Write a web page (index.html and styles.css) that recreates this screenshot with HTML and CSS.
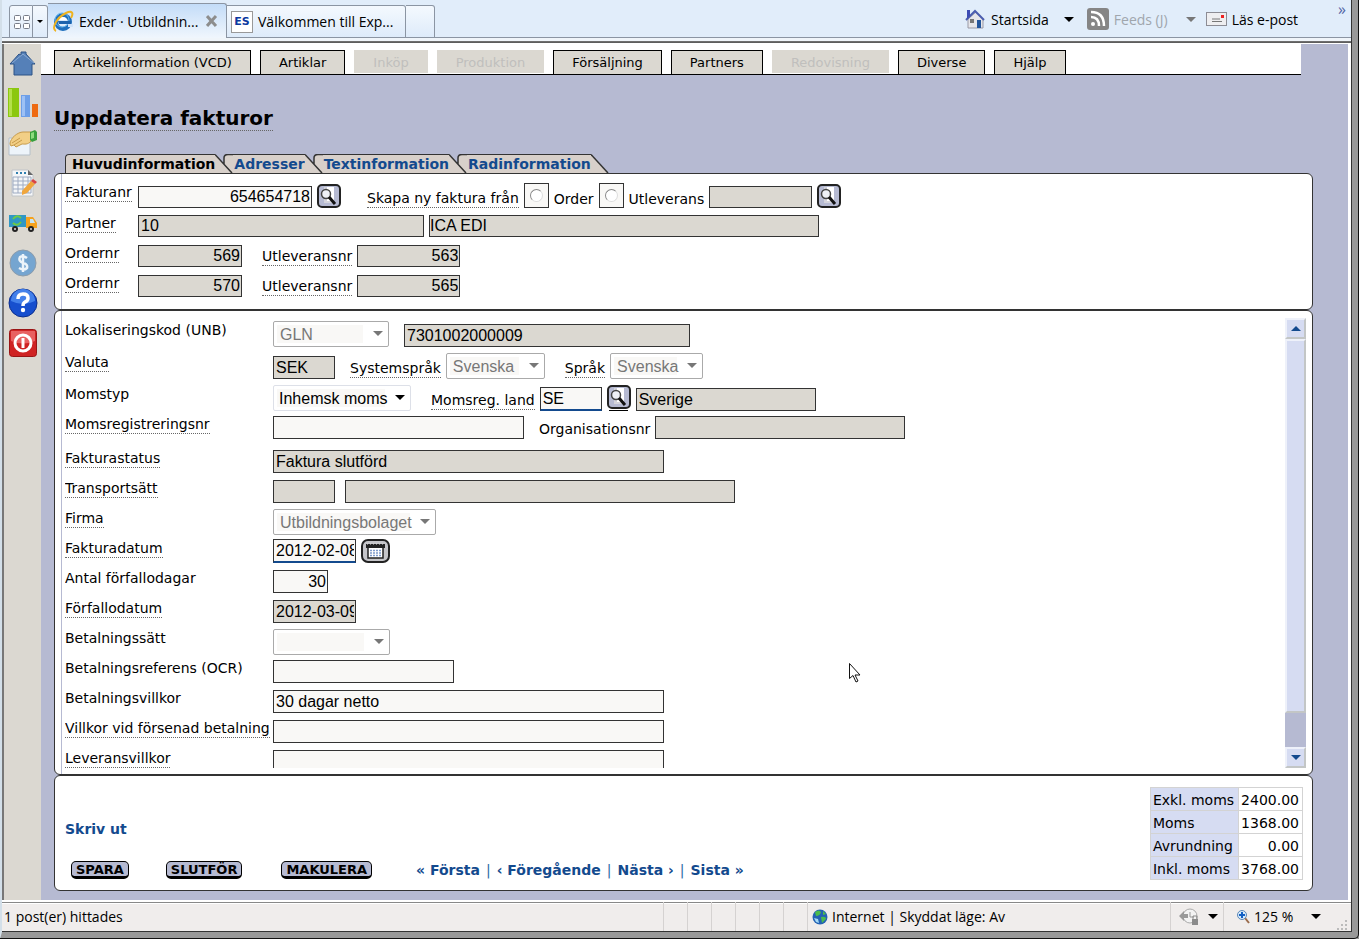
FILE: index.html
```html
<!DOCTYPE html>
<html lang="sv">
<head>
<meta charset="utf-8">
<title>Exder · Utbildning</title>
<link rel="stylesheet" href="styles.css">
</head>
<body>
<svg class="defs" aria-hidden="true">
  <defs>
    <symbol id="search" viewBox="0 0 24 24">
      <rect x="1" y="1" width="22" height="22" rx="4" fill="#b6bad2" stroke="#222" stroke-width="2"/>
      <path d="M7 3h10v16H7z" fill="#d4d4dc"/><path d="M10 3h7v14h-7z" fill="#fff"/>
      <circle cx="9" cy="10" r="4.500" fill="#eef0f6" stroke="#444" stroke-width="1.500"/>
      <path d="M12 13l6 7" stroke="#111" stroke-width="3"/>
    </symbol>
    <symbol id="seam" viewBox="0 0 18 19">
      <path d="M0 0h18v19H0z" fill="#d8d0ca"/>
      <path d="M0 0L9 10V4Q9 1 12 0z" fill="#b6bad2"/>
      <path d="M9 10V4Q9 .5 13 .5h5M0 .5L17 19" fill="none" stroke="#333" stroke-width="1.500"/>
    </symbol>
  </defs>
</svg>
<header class="browser">
  <div class="tabs-browser">
    <button class="btab quick" aria-label="Snabbflikar"><svg width="16" height="14" viewBox="0 0 16 14" fill="#fff" stroke="#777c88"><rect x=".5" y=".5" width="6" height="5" rx="1"/><rect x="9.500" y=".5" width="6" height="5" rx="1"/><rect x=".5" y="8.500" width="6" height="5" rx="1"/><rect x="9.500" y="8.500" width="6" height="5" rx="1"/></svg></button>
    <button class="btab drop" aria-label="Flikar"><i class="tri small"></i></button>
    <button class="btab active">
      <svg width="21" height="22" viewBox="0 0 21 22"><circle cx="10" cy="12" r="7" fill="none" stroke="#1f6fbd" stroke-width="4"/><circle cx="9" cy="10" r="7" fill="none" stroke="#63b5ee" stroke-width="1"/><path d="M5 11h13v3H6z" fill="#1b62ad"/><path d="M6 10c1-4 7-4 8 0z" fill="#fff"/><path d="M15 14h5v3h-5z" fill="#cfe2fa"/><path d="M3 21C-2 19 3 8 13 3c6-3 8 0 5 5" fill="none" stroke="#eeb320" stroke-width="2"/></svg>
      <span>Exder · Utbildnin...</span>
      <svg class="close" width="12" height="12" viewBox="0 0 12 12"><path d="M1 1l9 10M10 1L1 11" stroke="#8d8d8d" stroke-width="3"/></svg>
    </button>
    <button class="btab second">
      <span class="es">ES</span><span>Välkommen till Exp...</span>
    </button>
    <button class="btab blank" aria-label="Ny flik"></button>
  </div>
  <nav class="commands">
    <a href="#"><svg width="21" height="21" viewBox="0 0 21 21"><path d="M3 10v9h15v-9l-7-7z" fill="#e6e6ea" stroke="#9999a5"/><path d="M1 11L10 2l9 9" fill="none" stroke="#4b5dae" stroke-width="2"/><path d="M2 1h3v6l-3 3z" fill="#3c4bb4"/><path d="M12 11h4v8h-4z" fill="#24569c"/><path d="M5 10h4v4H5z" fill="#777"/></svg>Startsida</a>
    <i class="tri"></i>
    <a href="#" class="off"><svg width="22" height="22" viewBox="0 0 22 22"><rect width="22" height="22" rx="3" fill="#858585"/><circle cx="6" cy="16" r="2" fill="#fff"/><path d="M4 9q8 0 8 9M4 4q13 0 13 14" fill="none" stroke="#fff" stroke-width="2.500"/></svg>Feeds (J)</a>
    <i class="tri gray"></i>
    <a href="#" class="mail"><svg width="21" height="14" viewBox="0 0 21 14"><rect x=".5" y=".5" width="20" height="13" fill="#eeeef0" stroke="#8c8c94"/><path d="M15 3h3v3h-3z" fill="#e22"/><path d="M6 7h8M6 9.500h10" stroke="#777"/></svg>Läs e-post</a>
    <span class="more">»</span>
  </nav>
</header>
<div class="window">
  <aside class="side">
    <a href="#" aria-label="Hem"><svg width="28" height="28" viewBox="0 0 28 28"><path d="M5 14v11h18V14h3L17 4V2h-5v3l-2-1-9 10z" fill="#5580b8" stroke="#2d5286"/><path d="M3 13L14 4l11 9" fill="none" stroke="#88a9d4"/></svg></a>
    <a href="#" aria-label="Statistik"><svg width="30" height="32" viewBox="0 0 30 32"><path d="M0 1h11v29H0z" fill="#8bc70f"/><path d="M1 2h3v27H1z" fill="#b4e04a"/><path d="M13 8h9v22h-9z" fill="#6d9fe8"/><path d="M14 9h3v20h-3z" fill="#9dc1f5"/><path d="M24 17h6v13h-6z" fill="#ee6a10"/></svg></a>
    <a href="#" aria-label="Partners"><svg width="30" height="28" viewBox="0 0 30 28"><path d="M1 9h21v17H1z" fill="#edf4fa" stroke="#b4bfc9"/><path d="M2 15c0-6 8-12 13-12h8v9c-3 4-7 3-9 3l-6 3-2-2-3 1z" fill="#f2cf86" stroke="#c79b4b"/><path d="M4 14l8-5M6 16l8-5" stroke="#c79b4b"/><path d="M22 3l5-2 2 2v8l-5 2-2-2z" fill="#37a03c"/><path d="M23 4l3-1v6l-3 1z" fill="#8bdc7d"/></svg></a>
    <a href="#" aria-label="Dokument"><svg width="28" height="30" viewBox="0 0 28 30"><path d="M3 2h16l5 5v21H3z" fill="#f4f6f8" stroke="#c0c4c8"/><path d="M4 9h18v16H4zM4 13h18M4 17h18M4 21h18M9 9v16M14 9v16M19 9v16" fill="none" stroke="#9eabc2"/><path d="M7 5h2m2 0h2m2 0h2" stroke="#2f7faf" stroke-width="2"/><path d="M19 2l5 5h-5z" fill="#666"/><path d="M13 23l9-10 4 3-8 9-5 2z" fill="#f0a63c"/><path d="M22 13l2-2 4 3-2 2z" fill="#d84444"/></svg></a>
    <a href="#" aria-label="Leverans"><svg width="30" height="20" viewBox="0 0 30 20"><path d="M1 2h17v12H1z" fill="#2f97c5"/><path d="M5 6q4-5 8-1M13 9q-4 5-8 1" fill="none" stroke="#6cca45" stroke-width="2"/><path d="M18 4h7l4 6v5H18z" fill="#f5a21d"/><path d="M22 6h3l2 4h-5z" fill="#c7e6f5"/><circle cx="7" cy="16" r="3" fill="#222"/><circle cx="23" cy="16" r="3" fill="#222"/><circle cx="7" cy="16" r="1" fill="#ddd"/><circle cx="23" cy="16" r="1" fill="#ddd"/></svg></a>
    <a href="#" aria-label="Ekonomi"><svg width="28" height="28" viewBox="0 0 28 28"><circle cx="14" cy="14" r="13" fill="#75a5d0" stroke="#8c9cab"/><path d="M18 9q-4-3-7-1-2 4 3 6 5 1 4 5-3 3-8 0M14 5v18" fill="none" stroke="#edf4fa" stroke-width="2.500"/></svg></a>
    <a href="#" aria-label="Hjälp"><svg width="30" height="30" viewBox="0 0 30 30"><circle cx="15" cy="15" r="14" fill="#174fce" stroke="#0d2f8d"/><path d="M3 13a12 12 0 0 1 24 0q-12 6-24 0" fill="#4380ea"/><path d="M10 11q0-5 5-5t5 4q0 3-3 4-2 1-2 4" fill="none" stroke="#fff" stroke-width="3.500"/><circle cx="15" cy="22" r="2.200" fill="#fff"/></svg></a>
    <a href="#" aria-label="Logga ut"><svg width="28" height="28" viewBox="0 0 28 28"><rect x=".5" y=".5" width="27" height="27" rx="3" fill="#cf2323" stroke="#991515"/><path d="M2 2h24v10Q14 17 2 12z" fill="#e86161"/><circle cx="14" cy="14" r="8" fill="none" stroke="#fff" stroke-width="3"/><path d="M14 9v10" stroke="#fff" stroke-width="3"/></svg></a>
  </aside>
  <div class="page">
    <nav class="menu">
      <button>Artikelinformation (VCD)</button><button>Artiklar</button><button disabled>Inköp</button><button disabled>Produktion</button><button>Försäljning</button><button>Partners</button><button disabled>Redovisning</button><button>Diverse</button><button>Hjälp</button>
    </nav>
    <main class="content">
      <h1><span>Uppdatera fakturor</span></h1>
      <nav class="tabs">
        <a href="#" class="first">Huvudinformation</a><svg width="18" height="19"><use href="#seam"/></svg>
        <a href="#">Adresser</a><svg width="18" height="19"><use href="#seam"/></svg>
        <a href="#">Textinformation</a><svg width="18" height="19"><use href="#seam"/></svg>
        <a href="#">Radinformation</a><svg width="18" height="19" viewBox="0 0 18 19"><path d="M0 0L17 19H0z" fill="#d8d0ca"/><path d="M0 .5L17 19" stroke="#333" stroke-width="1.500"/></svg>
      </nav>
      <section class="panel ruled head">
        <div class="row r31"><label class="main" for="fnr"><span class="hint">Fakturanr</span></label>
          <div class="fields"><input id="fnr" class="w174 num" value="654654718"><button class="ico" aria-label="Sök faktura"><svg width="24" height="24"><use href="#search"/></svg></button>
            <span class="hint create">Skapa ny faktura från</span><span class="radio"><input type="radio" name="src" id="ro"></span><label for="ro">Order</label><span class="radio"><input type="radio" name="src" id="ru"></span><label for="ru">Utleverans</label><input class="w103" readonly aria-label="Nummer"><button class="ico" aria-label="Sök order"><svg width="24" height="24"><use href="#search"/></svg></button></div></div>
        <div class="row"><label class="main" for="pa"><span class="hint">Partner</span></label><div class="fields"><input id="pa" class="w286" readonly value="10"><input class="w390 tight" readonly value="ICA EDI" aria-label="Partnernamn"></div></div>
        <div class="row"><label class="main" for="o1"><span class="hint">Ordernr</span></label><div class="fields"><input id="o1" class="w104 num" readonly value="569"><label class="hint far" for="u1">Utleveransnr</label><input id="u1" class="w103 num" readonly value="563"></div></div>
        <div class="row"><label class="main" for="o2"><span class="hint">Ordernr</span></label><div class="fields"><input id="o2" class="w104 num" readonly value="570"><label class="hint far" for="u2">Utleveransnr</label><input id="u2" class="w103 num" readonly value="565"></div></div>
      </section>
      <section class="panel ruled body">
        <div class="form">
          <div class="row r32"><label class="main" for="lk">Lokaliseringskod (UNB)</label><div class="fields"><span class="sel w116"><select id="lk" disabled><option>GLN</option></select></span><input class="w286 push" readonly value="7301002000009" aria-label="Kod"></div></div>
          <div class="row r32"><label class="main" for="va"><span class="hint">Valuta</span></label><div class="fields"><input id="va" class="w62" readonly value="SEK"><label class="hint mid" for="ss">Systemspråk</label><span class="sel w99"><select id="ss" disabled><option>Svenska</option></select></span><label class="hint far" for="sp">Språk</label><span class="sel w93"><select id="sp" disabled><option>Svenska</option></select></span></div></div>
          <div class="row"><label class="main" for="mt">Momstyp</label><div class="fields"><span class="sel on w138"><select id="mt"><option>Inhemsk moms</option></select></span><label class="hint far" for="ml">Momsreg. land</label><input id="ml" class="w62 req" value="SE"><button class="ico low" aria-label="Sök land"><svg width="24" height="24"><use href="#search"/></svg></button><input class="w180" readonly value="Sverige" aria-label="Land"></div></div>
          <div class="row r34"><label class="main" for="mr"><span class="hint">Momsregistreringsnr</span></label><div class="fields"><input id="mr" class="w251"><label class="mid" for="on">Organisationsnr</label><input id="on" class="w250" readonly></div></div>
          <div class="row"><label class="main" for="fs"><span class="hint">Fakturastatus</span></label><div class="fields"><input id="fs" class="w391" readonly value="Faktura slutförd"></div></div>
          <div class="row"><label class="main" for="ts"><span class="hint">Transportsätt</span></label><div class="fields"><input id="ts" class="w62" readonly><input class="w390 push5" readonly aria-label="Transportsätt, namn"></div></div>
          <div class="row"><label class="main" for="fi"><span class="hint">Firma</span></label><div class="fields"><span class="sel w163"><select id="fi" disabled><option>Utbildningsbolaget</option></select></span></div></div>
          <div class="row"><label class="main" for="fd"><span class="hint">Fakturadatum</span></label><div class="fields"><input id="fd" class="w83 req" value="2012-02-08"><button class="ico" aria-label="Kalender"><svg width="29" height="24" viewBox="0 0 29 24"><rect x="1" y="1" width="27" height="22" rx="6" fill="#c5c5c9" stroke="#222" stroke-width="2"/><path d="M7 8h15v11H7z" fill="#fff" stroke="#222" stroke-width="1.500"/><path d="M5 5h19v4H5z" fill="#222"/><path d="M6 5h18" stroke="#ddd" stroke-dasharray="1 2"/><path d="M9 11.500h11M9 14h11M9 16.500h11" stroke="#7f9ccd" stroke-width="1.500" stroke-dasharray="2 1"/></svg></button></div></div>
          <div class="row"><label class="main" for="af">Antal förfallodagar</label><div class="fields"><input id="af" class="w55 num" value="30"></div></div>
          <div class="row"><label class="main" for="ff"><span class="hint">Förfallodatum</span></label><div class="fields"><input id="ff" class="w83" readonly value="2012-03-09"></div></div>
          <div class="row"><label class="main" for="bs">Betalningssätt</label><div class="fields"><span class="sel w117"><select id="bs" disabled><option></option></select></span></div></div>
          <div class="row"><label class="main" for="br">Betalningsreferens (OCR)</label><div class="fields"><input id="br" class="w181"></div></div>
          <div class="row"><label class="main" for="bv">Betalningsvillkor</label><div class="fields"><input id="bv" class="w391" value="30 dagar netto"></div></div>
          <div class="row"><label class="main" for="vf"><span class="hint">Villkor vid försenad betalning</span></label><div class="fields"><input id="vf" class="w391"></div></div>
          <div class="row"><label class="main" for="lv"><span class="hint">Leveransvillkor</span></label><div class="fields"><input id="lv" class="w391"></div></div>
        </div>
        <div class="scroll"><button aria-label="Upp"><svg width="10" height="5" viewBox="0 0 10 5"><path d="M0 5l5-5 5 5z" fill="#134a8e"/></svg></button><div class="thumb"></div><div class="track"></div><button aria-label="Ned"><svg width="10" height="5" viewBox="0 0 10 5"><path d="M0 0l5 5 5-5z" fill="#134a8e"/></svg></button></div>
      </section>
      <section class="panel foot">
        <div class="actions">
          <a href="#">Skriv ut</a>
          <div class="bar">
            <button class="act">SPARA</button><button class="act">SLUTFÖR</button><button class="act wide">MAKULERA</button>
            <nav class="pager"><a href="#">« Första</a><span>|</span><a href="#">‹ Föregående</a><span>|</span><a href="#">Nästa ›</a><span>|</span><a href="#">Sista »</a></nav>
          </div>
        </div>
        <table class="sums">
          <tr><th scope="row">Exkl. moms</th><td>2400.00</td></tr>
          <tr><th scope="row">Moms</th><td>1368.00</td></tr>
          <tr><th scope="row">Avrundning</th><td>0.00</td></tr>
          <tr><th scope="row">Inkl. moms</th><td>3768.00</td></tr>
        </table>
      </section>
    </main>
  </div>
</div>
<footer class="status">
  <span class="msg">1 post(er) hittades</span>
  <i></i><i></i><i></i><i></i><i></i><i></i>
  <span class="zone"><svg width="16" height="16" viewBox="0 0 16 16"><circle cx="8" cy="8" r="7.500" fill="#2462b4"/><path d="M3 3q4-3 6 0-1 4-5 4zM9 8q5-1 5 2l-4 4zM11 2l3 3-3 1z" fill="#4cbc4c"/><path d="M2 9l4 1 1 4-3-1z" fill="#a5daf5"/></svg>Internet | Skyddat läge: Av</span>
  <span class="lock"><svg width="20" height="18" viewBox="0 0 20 18"><circle cx="11" cy="8" r="7" fill="#f3f3f3" stroke="#aaa"/><path d="M11 4v5h4" fill="none" stroke="#999"/><path d="M0 8l5-5v3h4v4H5v3z" fill="#999"/><path d="M13 11h6v6h-6z" fill="#8b8b8b"/><path d="M14 11V8h4v3" fill="none" stroke="#8b8b8b"/></svg><i class="tri"></i></span>
  <span class="zoom"><svg width="13" height="14" viewBox="0 0 13 14"><path d="M8 8l4 5" stroke="#9a6b4b" stroke-width="2"/><circle cx="5" cy="5" r="4.500" fill="#d6eafb" stroke="#5d87b5"/><path d="M5 2v6M2 5h6" stroke="#1360c4" stroke-width="2"/></svg>125 %<i class="tri"></i></span>
  <svg class="grip" width="11" height="11" viewBox="0 0 11 11"><path d="M8 0h2v2H8zM4 4h2v2H4zM8 4h2v2H8zM0 8h2v2H0zM4 8h2v2H4zM8 8h2v2H8z" fill="#bbb"/></svg>
</footer>
<svg class="cursor" width="12" height="20" viewBox="0 0 12 20"><path d="M.5 .5v15l3.500-3 3 6.500 2-1-3-6h5z" fill="#fff" stroke="#111"/></svg>
</body>
</html>
```
FILE: styles.css
```css
* { box-sizing: border-box; }
body {
  margin: 0; height: 100vh; display: flex; flex-direction: column; overflow: hidden;
  border-left: 2px solid #d3dfe9; border-right: 7px solid #999; border-bottom: 7px solid #999; padding-right: 1px;
  font-family: Verdana, "DejaVu Sans", sans-serif; font-size: 14px; color: #000; background: #333;
}
body::after { content: ""; position: absolute; inset: 0; border: solid #111; border-width: 0 1px 1px 0; border-radius: 0 0 5px 0; pointer-events: none; }
button { font: inherit; color: inherit; margin: 0; padding: 0; border: 0; background: none; }
a { color: #134a8e; text-decoration: none; }
svg { display: block; flex: none; }
.defs { position: absolute; width: 0; height: 0; }
.cursor { position: absolute; left: 849px; top: 663px; }
.tri { border: 5px solid transparent; border-top-color: #000; border-bottom: 0; }
.tri.small { border-width: 3px; border-bottom: 0; }
.tri.gray { border-top-color: #777; }

/* Browser chrome */
.browser {
  flex: none; height: 44px; display: flex; justify-content: space-between;
  font-family: "Segoe UI", "Open Sans", sans-serif; font-size: 14px;
  background: linear-gradient(#e1edfa 37px, #8b95a3 37px, #8b95a3 38px, #f0f5fa 38px, #f0f5fa 41px, #777 41px, #555 43px, #fff 43px);
}
.tabs-browser { display: flex; height: 38px; padding: 0 0 0 7px; align-items: flex-end; }
.btab {
  height: 33px; display: flex; align-items: center; border: 1px solid #8b95a3; border-left: 0;
  background: linear-gradient(#f4f9fe, #deebfa); border-radius: 0 3px 0 0; white-space: nowrap;
}
.quick { width: 24px; padding-left: 4px; border-left: 1px solid #8b95a3; border-radius: 3px 0 0 0; }
.drop { width: 15px; justify-content: center; }
.active { height: 35px; width: 179px; padding: 0 8px 0 5px; gap: 5px; background: linear-gradient(#c3dcf8, #f0f6fd); border-bottom: 0; }
.close { margin-left: auto; }
.second { width: 179px; padding-left: 4px; gap: 5px; }
.blank { width: 29px; }
.es { width: 22px; height: 22px; border: 1px solid #999; background: #fff; color: #0b38a0; font: bold 11px/20px "DejaVu Sans", sans-serif; text-align: center; }
.commands { display: flex; align-items: center; height: 38px; padding-right: 5px; }
.commands a { display: flex; align-items: center; gap: 5px; color: #000; }
.commands a.off { color: #a0a6ad; margin-left: 13px; }
.commands .tri { margin-left: 15px; }
.commands .tri.gray { margin-left: 18px; }
.commands a.mail { margin-left: 10px; }
.more { align-self: flex-start; margin-left: 40px; color: #5366a5; font-size: 16px; line-height: 18px; }

/* Application frame */
.window { flex: 1; min-height: 0; display: flex; border-left: 2px solid #777; border-right: 3px solid #fff; }
.side { width: 37px; flex: none; background: #dbd8d1; display: flex; flex-direction: column; }
.side a { height: 40px; display: flex; align-items: center; justify-content: center; }
.side a:first-child { height: 39px; }
.page { flex: 1; min-width: 0; display: flex; flex-direction: column; background: #b6bad2; }
.menu {
  flex: none; height: 31px; margin-right: 47px; padding: 6px 0 0 13px; display: flex; gap: 9px;
  background: #fff; border-bottom: 1px solid #000; font-size: 13px;
}
.menu button { height: 24px; padding: 0 18px; border: 1px solid #000; border-bottom: 0; background: #dbd8d1; white-space: nowrap; }
.menu button:disabled { height: 23px; border-color: #dbd8d1; color: #c0bfbd; }
.content { flex: 1; min-height: 0; display: flex; flex-direction: column; padding: 31px 35px 9px 13px; }
h1 { margin: 0 0 23px; font-size: 20px; line-height: 24px; }
h1 span { display: inline-block; border-bottom: 1px dotted #666; }
.tabs { display: flex; height: 19px; flex: none; padding-left: 11px; font-weight: bold; }
.tabs a { height: 19px; line-height: 18px; background: #d8d0ca; border-top: 1px solid #333; padding: 0 0 0 1px; white-space: nowrap; }
.tabs a.first { color: #000; border-left: 1px solid #333; border-radius: 4px 0 0 0; padding-left: 6px; }

/* Panels */
.panel { position: relative; background: #fff; border: 1px solid #333; border-radius: 6px; padding-left: 10px; flex: none; }
.ruled::before { content: ""; position: absolute; left: 6px; top: 0; bottom: 0; border-left: 1px solid #b6bad2; }
.head { padding-top: 9px; padding-bottom: 5px; }
.panel.body { flex: 1; min-height: 0; display: flex; padding: 7px 6px 6px 10px; }
.form { flex: 1; min-width: 0; overflow: hidden; padding-top: 3px; }
.row { display: flex; align-items: flex-start; height: 30px; line-height: 17px; white-space: nowrap; }
.row.r31 { height: 31px; }
.row.r32 { height: 32px; }
.row.r34 { height: 34px; }
.main { flex: none; width: 208px; line-height: 18px; }
.head .main { width: 73px; }
.hint { display: inline-block; border-bottom: 1px dotted #666; }
.fields { display: flex; align-items: flex-end; gap: 5px; min-height: 24px; }
.head .fields { min-height: 23px; }
.fields input:not([type="radio"]) {
  height: 23px; padding: 0 1px 0 2px; border: 1px solid #333; border-radius: 0; outline: 0;
  background: #f9f8f6; color: #000; font: 16px "Liberation Sans", Arial, sans-serif;
}
.head .fields input:not([type="radio"]) { height: 22px; }
.head .fields input.tight[readonly] { padding-left: 0; }
.fields input { margin: 0; }
.fields input[readonly] { background: #dbd8d1 !important; }
.fields input.num { text-align: right; }
.fields input.w62.req, .fields input.w83.req { height: 24px; border-bottom: 2px solid #134a8e; }
.radio { width: 25px; height: 25px; border: 1px solid #333; background: #f9f8f6; display: flex; align-items: center; justify-content: center; }
.radio input { appearance: none; width: 13px; height: 13px; border: 1px solid #888; border-right-color: #ddd; border-bottom-color: #ddd; border-radius: 50%; background: #fff; }
.create { margin-left: 21px; }
.far { margin: 0 0 1px 15px; }
.mid { margin: 0 0 1px 10px; }
.fields .push { margin-left: 10px; }
.fields .push5 { margin-left: 5px; }
.sel { position: relative; height: 26px; }
.sel select {
  appearance: none; width: 100%; height: 26px; display: block; margin: 0; padding: 0 0 0 6px; border: 1px solid #aaa; border-radius: 2px;
  background: #fff linear-gradient(#f9f8f6, #f9f8f6) 3px 3px / calc(100% - 28px) 18px no-repeat; color: #777; opacity: 1; font: 16px "Liberation Sans", Arial, sans-serif;
}
.sel.on select { color: #000; border-color: #dde0e8; padding-left: 5px; }
.sel::after { content: ""; position: absolute; right: 6px; top: 10px; border: 5px solid transparent; border-top-color: #777; border-bottom: 0; pointer-events: none; }
.sel.on::after { border-top-color: #000; }
.w55 { width: 55px; } .w62 { width: 62px; } .w83 { width: 83px; } .w93 { width: 93px; } .w99 { width: 99px; }
.w103 { width: 103px; } .w104 { width: 104px; } .w116 { width: 116px; } .w117 { width: 117px; } .w138 { width: 138px; }
.w163 { width: 163px; } .w174 { width: 174px; } .w180 { width: 180px; } .w181 { width: 181px; } .w250 { width: 250px; }
.w251 { width: 251px; } .w286 { width: 286px; } .w390 { width: 390px; } .w391 { width: 391px; }
.low { background: linear-gradient(#000, #000) center bottom / 19px 1px no-repeat; padding-bottom: 2px; }

.scroll { width: 21px; flex: none; display: flex; flex-direction: column; background: #b6bad2; }
.scroll button, .thumb { background: #d6dcf2; border: 2px solid #eef1fa; border-right-color: #c3c6c6; border-bottom-color: #c3c6c6; }
.scroll button { height: 21px; display: flex; align-items: center; justify-content: center; }
.thumb { flex: 374; }
.track { flex: 34; }

.foot { display: flex; justify-content: space-between; align-items: flex-start; padding: 11px 9px 9px 10px; height: 116px; }
.actions { padding-top: 33px; font-weight: bold; line-height: 18px; }
.bar { display: flex; align-items: center; padding: 23px 0 0 6px; }
.act { height: 18px; padding: 0 4px; margin-right: 37px; border: 1px solid #000; border-bottom-width: 3px; border-radius: 5px; background: #b6bad2; font-size: 13px; line-height: 13px; font-weight: bold; }
.act.wide { margin-left: 2px; margin-right: 44px; }
.pager { display: flex; gap: 6px; white-space: nowrap; }
.pager span { font-weight: normal; color: #2a6ca5; }
.sums { border-collapse: collapse; line-height: 18px; }
.sums th, .sums td { height: 23px; padding: 3px 3px 1px 2px; border: 1px solid #d3d3d3; font-weight: normal; text-align: left; }
.sums th { background: #d6dcf2; padding-right: 4px; }
.sums td { text-align: right; }

/* Status bar */
.status {
  flex: none; height: 32px; display: flex; align-items: stretch; padding: 0 3px 0 2px; border-top: 2px solid #fff; border-bottom: 1px solid #333;
  font: 14px/29px "Segoe UI", "Open Sans", sans-serif; background: linear-gradient(#888 1px, #fff 1px, #fff 2px, #f0edec 2px); white-space: nowrap;
}
.msg { flex: 1; }
.status > i { width: 24px; border-left: 1px solid #d5d2d1; }
.zone, .lock, .zoom { display: flex; align-items: center; gap: 4px; border-left: 1px solid #d5d2d1; padding-left: 4px; }
.zone { width: 363px; }
.lock { width: 53px; padding-left: 8px; gap: 9px; }
.zoom { width: 114px; padding-left: 13px; }
.zoom .tri { margin-left: 14px; }
.grip { align-self: flex-end; }
```
